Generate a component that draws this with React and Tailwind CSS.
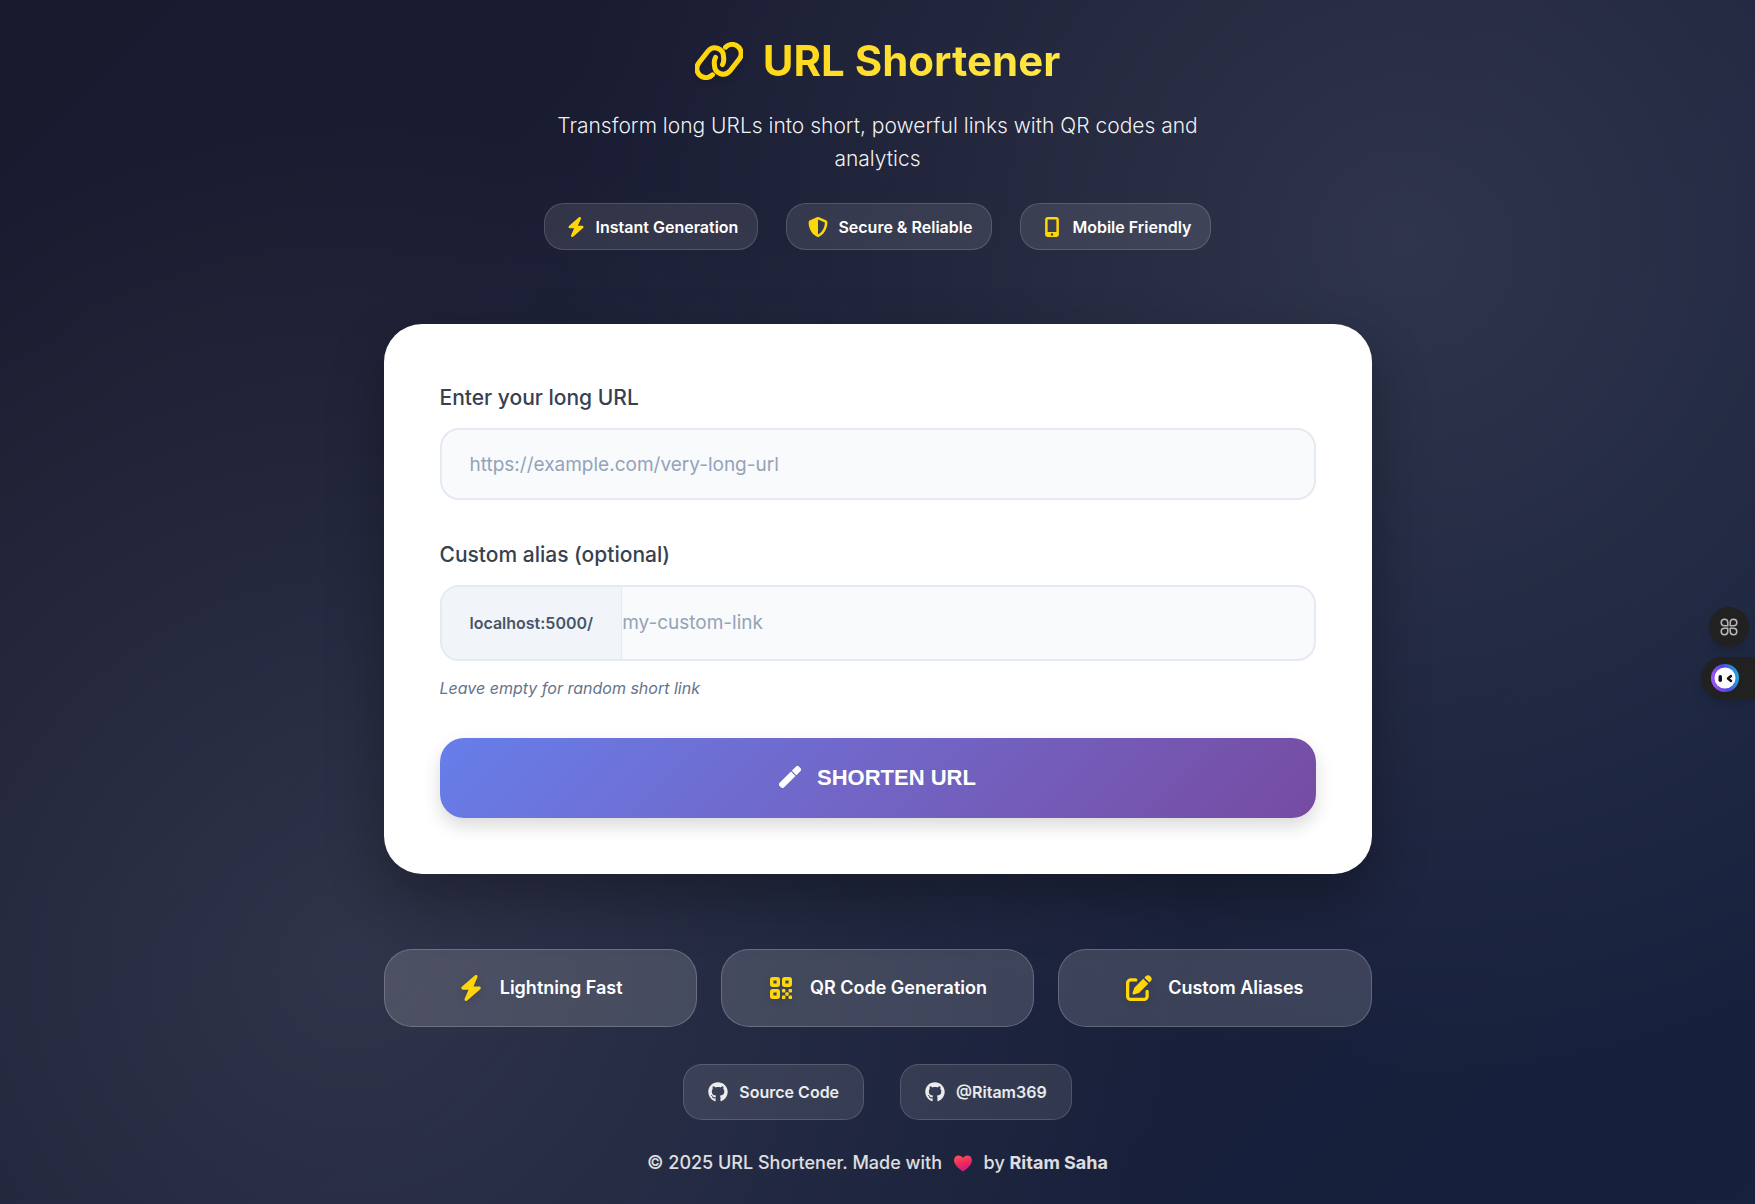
import {
  FaBolt,
  FaGithub,
  FaMobileScreenButton,
  FaPenToSquare,
  FaShieldHalved,
} from "react-icons/fa6";

function LinkMark({ className }) {
  return (
    <svg viewBox="0 0 48 38" className={className} fill="none" stroke="currentColor" strokeWidth="5" strokeLinecap="round" strokeLinejoin="round" aria-hidden="true">
      <path d="M17.500 32.800A9 9 0 0 1 4.300 20.300L13.300 8.800A8.700 8.700 0 0 1 28.500 14.500C29 17.500 29 20 27.500 22.500" />
      <path d="M30.500 5.200A9 9 0 0 1 43.700 17.700L34.700 29.200A8.700 8.700 0 0 1 19.500 23.500C19 20.500 19 18 20.500 15.500" />
    </svg>
  );
}

function QrMark({ className }) {
  return (
    <svg viewBox="0 0 26 26" className={className} fill="none" stroke="currentColor" strokeWidth="3.400" strokeLinejoin="round" aria-hidden="true">
      <rect x="3.700" y="3.700" width="6.600" height="6.600" rx="1" />
      <rect x="15.700" y="3.700" width="6.600" height="6.600" rx="1" />
      <rect x="3.700" y="15.700" width="6.600" height="6.600" rx="1" />
      <g fill="currentColor" stroke="none">
        <rect x="14" y="14" width="3.400" height="3.400" rx="0.800" />
        <rect x="20.600" y="14" width="3.400" height="3.400" rx="0.800" />
        <rect x="17.300" y="17.300" width="3.400" height="3.400" rx="0.800" />
        <rect x="14" y="20.600" width="3.400" height="3.400" rx="0.800" />
        <rect x="20.600" y="20.600" width="3.400" height="3.400" rx="0.800" />
      </g>
    </svg>
  );
}

function WandMark({ className }) {
  return (
    <svg viewBox="0 0 24 24" className={className} fill="currentColor" aria-hidden="true">
      <g transform="rotate(-45 12 12)">
        <path d="M-0.500 8.500H17V15.500H-0.500A2.500 2.500 0 0 1 -3 13V11A2.500 2.500 0 0 1 -0.500 8.500Z" />
        <path d="M18.300 8.500H24.500A2.500 2.500 0 0 1 27 11V13A2.500 2.500 0 0 1 24.500 15.500H18.300Z" />
      </g>
    </svg>
  );
}

function Heart() {
  return (
    <svg viewBox="0 0 20 18" className="mx-1.5 inline-block h-[17px] w-5 align-[-3px]" role="img" aria-label="love">
      <defs>
        <linearGradient id="heart" x1="0" y1="0" x2="0.4" y2="1">
          <stop offset="0" stopColor="#ff5a5f" />
          <stop offset="0.6" stopColor="#f0285a" />
          <stop offset="1" stopColor="#c81e8c" />
        </linearGradient>
      </defs>
      <path fill="url(#heart)" d="M10 17.500C5 14 .5 10 .5 5.500C.5 2.500 2.700.5 5.300.5 7.300.5 9 1.500 10 3.300 11 1.500 12.700.5 14.700.5c2.600 0 4.800 2 4.800 5 0 4.500-4.500 8.500-9.500 12z" />
    </svg>
  );
}

function Petals() {
  return (
    <svg viewBox="0 0 20 20" className="size-5" fill="none" stroke="currentColor" strokeWidth="1.500" strokeLinejoin="round" aria-hidden="true">
      <path d="M8.800 8.800H5.400A3.300 3.300 0 1 1 8.800 5.400z" />
      <path d="M11.200 8.800h3.400A3.300 3.300 0 1 0 11.200 5.400z" />
      <path d="M8.800 11.200H5.400A3.300 3.300 0 1 0 8.800 14.600z" />
      <path d="M11.200 11.200h3.400A3.300 3.300 0 1 1 11.200 14.600z" />
    </svg>
  );
}

const badges = [
  { icon: FaBolt, label: "Instant Generation" },
  { icon: FaShieldHalved, label: "Secure & Reliable" },
  { icon: FaMobileScreenButton, label: "Mobile Friendly" },
];

const features = [
  { icon: FaBolt, label: "Lightning Fast" },
  { icon: QrMark, label: "QR Code Generation" },
  { icon: FaPenToSquare, label: "Custom Aliases" },
];

const links = ["Source Code", "@Ritam369"];

export default function App() {
  return (
    <div className="relative min-h-screen overflow-hidden bg-[radial-gradient(circle_at_20%_80%,rgba(255,255,255,0.1),transparent_50%),radial-gradient(circle_at_80%_20%,rgba(255,255,255,0.1),transparent_50%),linear-gradient(135deg,#1a1a2e,#16213e)] px-6 pt-8 pb-6 font-['Inter','Liberation_Sans',sans-serif]">
      <div className="mx-auto flex max-w-[988px] flex-col">
        <header className="flex flex-col items-center text-center">
          <h1 className="flex items-center gap-5 text-[42px] leading-[58px] font-bold">
            <LinkMark className="h-[38px] w-12 text-[#ffd60a] drop-shadow-md" />
            <span className="bg-linear-135 from-[#ffd60a] to-[#ffe94a] bg-clip-text text-transparent">URL Shortener</span>
          </h1>
          <p className="mt-[19px] max-w-[704px] text-[21px] leading-[33px] font-light text-white/95">
            Transform long URLs into short, powerful links with QR codes and analytics
          </p>
          <ul className="mt-7 flex flex-wrap justify-center gap-7">
            {badges.map(({ icon: Icon, label }) => (
              <li key={label} className="flex h-[47px] items-center gap-2 rounded-[20px] border border-white/15 bg-white/10 px-[19px] text-base font-semibold text-white">
                <Icon className="size-6 p-0.5 text-[#ffd60a]" />
                {label}
              </li>
            ))}
          </ul>
        </header>

        <form onSubmit={(e) => e.preventDefault()} className="mt-[74px] rounded-[38px] bg-white p-14 shadow-[0_24px_56px_rgba(0,0,0,0.3)]">
          <label htmlFor="long-url" className="block text-[21px] leading-9 font-medium text-[#374151]">Enter your long URL</label>
          <input id="long-url" type="url" placeholder="https://example.com/very-long-url" className="mt-3 block h-[72px] w-full rounded-[19px] border-2 border-[#e5eaf1] bg-[#f8fafc] px-7 text-[19px] outline-none placeholder:text-[#94a3b8]" />
          <label htmlFor="alias" className="mt-[37px] block text-[21px] leading-9 font-medium text-[#374151]">Custom alias (optional)</label>
          <div className="mt-3 flex h-[76px] overflow-hidden rounded-[19px] border-2 border-[#e5eaf1] bg-[#f8fafc]">
            <span className="flex items-center border-r border-[#e5eaf1] bg-[#f1f5f9] px-7 text-base font-semibold text-[#475569]">localhost:5000/</span>
            <input id="alias" type="text" placeholder="my-custom-link" className="min-w-0 flex-1 bg-transparent text-[19px] outline-none placeholder:text-[#94a3b8]" />
          </div>
          <p className="mt-[14px] text-base leading-[26px] text-[#64748b] italic">Leave empty for random short link</p>
          <button type="submit" className="mt-[37px] flex h-20 w-full items-center justify-center gap-4 rounded-3xl bg-linear-135 from-[#667eea] to-[#764ba2] pb-0.5 font-['Liberation_Sans',Arial,sans-serif] text-[22px] font-bold text-white shadow-[0_8px_18px_rgba(0,0,0,0.15)]">
            <WandMark className="size-[22px]" />
            SHORTEN URL
          </button>
        </form>

        <ul className="mt-[75px] grid grid-cols-3 gap-6">
          {features.map(({ icon: Icon, label }) => (
            <li key={label} className="flex h-[78px] items-center justify-center gap-4 rounded-[28px] border border-white/20 bg-white/15 text-lg font-semibold text-white">
              <Icon className="size-[26px] text-[#ffd60a] drop-shadow-md" />
              {label}
            </li>
          ))}
        </ul>

        <footer className="mt-[37px] flex flex-col items-center">
          <nav className="flex flex-wrap justify-center gap-9">
            {links.map((label) => (
              <a key={label} href="#" className="flex h-14 items-center gap-[11px] rounded-[19px] border border-white/15 bg-white/10 px-6 text-base font-semibold text-white/90">
                <FaGithub className="size-5" />
                {label}
              </a>
            ))}
          </nav>
          <p className="mt-7 text-lg leading-[30px] font-medium text-white/85">
            © 2025 URL Shortener. Made with <Heart /> by <strong className="font-bold">Ritam Saha</strong>
          </p>
        </footer>
      </div>

      <aside className="absolute top-[607px] right-0 flex flex-col items-end gap-2.5">
        <button type="button" aria-label="Shortcuts" className="mr-1.5 flex size-10 items-center justify-center rounded-full bg-[#212121] text-[#b9b9b9] shadow-lg">
          <Petals />
        </button>
        <button type="button" aria-label="Assistant" className="flex h-[42px] w-[54px] items-center rounded-l-full bg-[#212121] pl-2.5 shadow-lg">
          <svg viewBox="0 0 28 28" className="size-7" aria-hidden="true">
            <defs>
              <linearGradient id="ring" x1="0" y1="0.6" x2="1" y2="0.4">
                <stop offset="0" stopColor="#a855f7" />
                <stop offset="0.5" stopColor="#4f46e5" />
                <stop offset="1" stopColor="#22a7d8" />
              </linearGradient>
            </defs>
            <circle cx="14" cy="14" r="14" fill="url(#ring)" />
            <circle cx="14" cy="14" r="10.500" fill="#fff" />
            <rect x="7.500" y="11" width="3.500" height="7" rx="1.700" fill="#111" />
            <path d="M20 12l-3 2.500 3 2.500" fill="none" stroke="#111" strokeWidth="2.500" strokeLinecap="round" strokeLinejoin="round" />
          </svg>
        </button>
      </aside>
    </div>
  );
}
